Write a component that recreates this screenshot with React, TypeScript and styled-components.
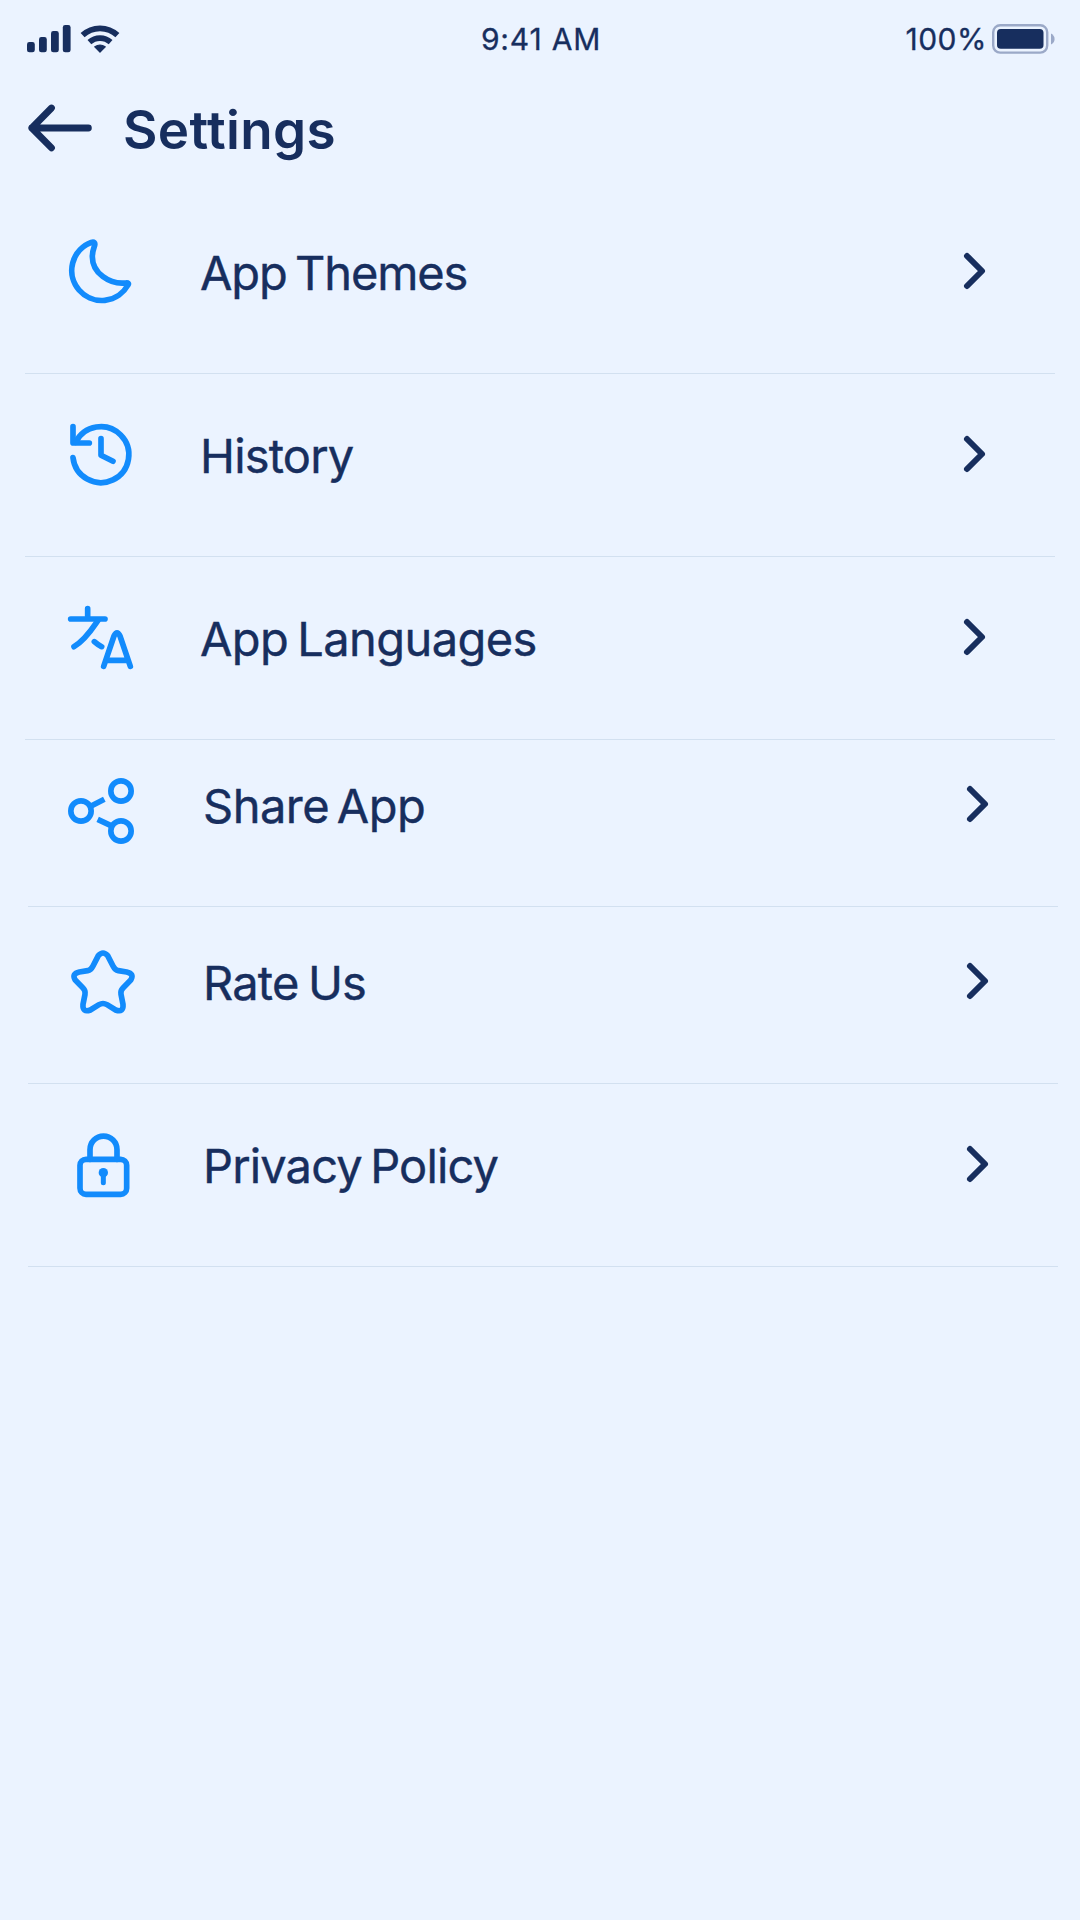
import React from "react";
import styled, { createGlobalStyle } from "styled-components";

const navy = "#172e5e";
const blue = "#128bfc";
const page = "#ebf3ff";

const GlobalStyle = createGlobalStyle`
  body {
    margin: 0;
    background: ${page};
  }
`;

const Screen = styled.main`
  display: flex;
  flex-direction: column;
  width: 1080px;
  height: 1920px;
  box-sizing: border-box;
  overflow: hidden;
  background: ${page};
  color: ${navy};
  font-family: Inter, "Liberation Sans", sans-serif;
`;

const StatusBar = styled.div`
  display: grid;
  grid-template-columns: 1fr auto 1fr;
  align-items: center;
  height: 78px;
  padding: 0 25px 0 27px;
  box-sizing: border-box;
`;

const StatusGroup = styled.div<{ $end?: boolean }>`
  display: flex;
  align-items: center;
  justify-content: ${(p) => (p.$end ? "flex-end" : "flex-start")};
  gap: ${(p) => (p.$end ? 5 : 9)}px;
`;

const StatusText = styled.span<{ $spacing: number }>`
  font-size: 30px;
  line-height: 40px;
  font-weight: 400;
  white-space: nowrap;
  -webkit-text-stroke: 0.3px ${navy};
  letter-spacing: ${(p) => p.$spacing}px;
`;

const Header = styled.header`
  display: flex;
  align-items: center;
  height: 100px;
  gap: 30px;
  padding-left: 27px;
  margin-bottom: 12px;
`;

const BackButton = styled.button`
  display: flex;
  padding: 0;
  border: 0;
  background: none;
`;

const Title = styled.h1`
  margin: 0;
  padding-top: 4px;
  font-size: 53px;
  line-height: 64px;
  font-weight: 600;
  letter-spacing: 0.35px;
`;

const Group = styled.section<{ $left: number }>`
  display: flex;
  flex-direction: column;
  width: 1030px;
  margin-left: ${(p) => p.$left}px;
`;

const Row = styled.div<{ $height: number }>`
  display: flex;
  align-items: flex-end;
  height: ${(p) => p.$height}px;
  box-sizing: border-box;
  padding: 0 68px 62px 35px;
  border-bottom: 1px solid #d2e0f0;
`;

const RowIcon = styled.svg`
  display: block;
  flex: none;
  width: 80px;
  height: 80px;
  overflow: visible;
  fill: none;
  stroke: ${blue};
  stroke-width: 17;
  stroke-linecap: round;
  stroke-linejoin: round;
`;

const Label = styled.span<{ $spacing: number; $word: number }>`
  flex: 1;
  height: 80px;
  box-sizing: border-box;
  padding-top: 4px;
  padding-left: 60px;
  font-size: 47px;
  line-height: 76px;
  font-weight: 400;
  white-space: nowrap;
  -webkit-text-stroke: 0.4px ${navy};
  letter-spacing: ${(p) => p.$spacing}px;
  word-spacing: ${(p) => p.$word}px;
`;

const Chevron = styled.svg`
  display: block;
  flex: none;
  width: 26px;
  height: 80px;
  fill: none;
  stroke: ${navy};
  stroke-width: 6;
  stroke-linecap: round;
  stroke-linejoin: round;
`;

type Item = {
  label: string;
  height: number;
  spacing: number;
  word: number;
  icon: React.ReactNode;
};

const general: Item[] = [
  {
    label: "App Themes",
    height: 184,
    spacing: -1.15,
    word: -3.5,
    icon: (
      <path d="M94 34A90 90 0 1 0 204 162C207 157 205 155 197 156C148 161 97 126 97 77C97 62 101 52 104 43C106 35 102 31 94 34Z" />
    ),
  },
  {
    label: "History",
    height: 183,
    spacing: -0.8,
    word: 0,
    icon: (
      <>
        <path d="M39 38V87H88" />
        <path d="M39 131A84 84 0 1 0 47 85" />
        <path d="M123 74V124L159 142" />
      </>
    ),
  },
  {
    label: "App Languages",
    height: 183,
    spacing: -0.6,
    word: -3.5,
    icon: (
      <>
        <path d="M32 66H135M83 35V66" />
        <path d="M114 70C98 93 78 127 42 149" />
        <path d="M103 134Q113 143 125 149" />
        <path d="M131 208L162 117Q171 98 180 117L211 208M142 190H200" />
      </>
    ),
  },
];

const about: Item[] = [
  {
    label: "Share App",
    height: 167,
    spacing: -0.5,
    word: -5,
    icon: (
      <>
        <circle cx="54" cy="141" r="30.5" />
        <circle cx="174" cy="81" r="30.5" />
        <circle cx="174" cy="201" r="30.5" />
        <path strokeLinecap="butt" d="M83 127L124 106M104 166L144 185" />
      </>
    ),
  },
  {
    label: "Rate Us",
    height: 177,
    spacing: -0.8,
    word: -3,
    icon: (
      <path d="M106 44Q120 28 134 44L150 75Q156 87 166 89L191 93Q214 98 204 116L180 141Q172 149 174 160L180 190Q182 216 158 207L132 191Q120 184 108 191L82 207Q58 216 60 190L66 160Q68 149 60 141L36 116Q26 98 49 93L74 89Q84 87 90 75Z" />
    ),
  },
  {
    label: "Privacy Policy",
    height: 183,
    spacing: -0.85,
    word: -4,
    icon: (
      <>
        <rect x="51" y="106" width="140" height="105" rx="18" />
        <path d="M81 106V77A40.5 40.5 0 0 1 162 77V106" />
        <circle cx="121" cy="146" r="14" fill={blue} stroke="none" />
        <path strokeWidth="15" d="M121 146V176" />
      </>
    ),
  },
];

const SettingsRow = ({ item }: { item: Item }) => (
  <Row $height={item.height}>
    <RowIcon viewBox="0 0 240 240">{item.icon}</RowIcon>
    <Label $spacing={item.spacing} $word={item.word}>
      {item.label}
    </Label>
    <Chevron viewBox="0 0 26 80">
      <path d="M6 25L21 40L6 55" />
    </Chevron>
  </Row>
);

export default function App() {
  return (
    <Screen>
      <GlobalStyle />
      <StatusBar>
        <StatusGroup>
          <svg width="44" height="28" viewBox="0 0 44 28" fill={navy}>
            <rect x="0" y="17" width="7.8" height="10.3" rx="2.4" />
            <rect x="12" y="12" width="7.8" height="15.3" rx="2.4" />
            <rect x="24" y="6" width="7.8" height="21.3" rx="2.4" />
            <rect x="35.8" y="0" width="7.8" height="27.3" rx="2.4" />
          </svg>
          <svg width="40" height="28" viewBox="0 0 40 28" fill="none" stroke={navy}>
            <path d="M2.6 10.2A25.5 25.5 0 0 1 37.4 10.2" strokeWidth="5.8" />
            <path d="M9.4 17.2A15.8 15.8 0 0 1 30.6 17.2" strokeWidth="5.6" />
            <path d="M14.8 21.8Q20 18.2 25.2 21.8L20 27.2Z" fill={navy} strokeWidth="1.2" strokeLinejoin="round" />
          </svg>
        </StatusGroup>
        <StatusText $spacing={0.8}>9:41 AM</StatusText>
        <StatusGroup $end>
          <StatusText $spacing={0.5}>100%</StatusText>
          <svg width="63" height="30" viewBox="0 0 63 30">
            <rect x="1.2" y="1.2" width="54" height="27.4" rx="7" fill="none" stroke="#9ba9c8" strokeWidth="2.4" />
            <rect x="5" y="5" width="46.5" height="19.8" rx="3.8" fill={navy} />
            <path d="M59 9.5Q62.6 11.5 62.6 15Q62.6 18.5 59 20.5Z" fill="#9ba9c8" />
          </svg>
        </StatusGroup>
      </StatusBar>
      <Header>
        <BackButton aria-label="Back">
          <svg width="66" height="50" viewBox="0 0 66 50" fill="none" stroke={navy} strokeWidth="6.8" strokeLinecap="round" strokeLinejoin="round">
            <path d="M24.5 5L4.8 25L24.5 44.8M4.8 25H61.4" />
          </svg>
        </BackButton>
        <Title>Settings</Title>
      </Header>
      <Group $left={25}>
        {general.map((item) => (
          <SettingsRow key={item.label} item={item} />
        ))}
      </Group>
      <Group $left={28}>
        {about.map((item) => (
          <SettingsRow key={item.label} item={item} />
        ))}
      </Group>
    </Screen>
  );
}
